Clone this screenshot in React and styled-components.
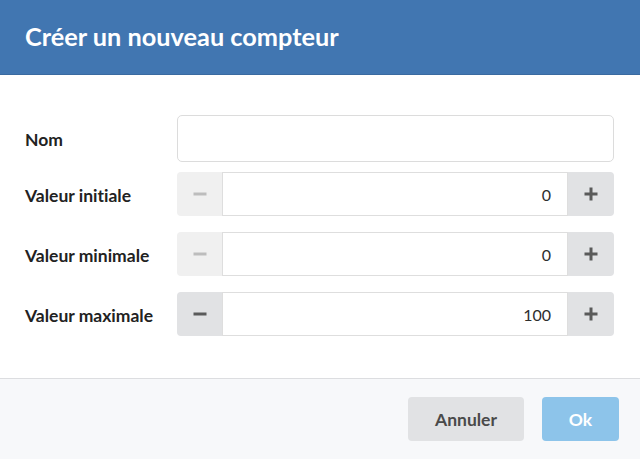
import * as React from 'react'
import styled, { createGlobalStyle } from 'styled-components'

const GlobalStyle = createGlobalStyle`
  html, body {
    margin: 0;
    padding: 0;
    background: #fff;
    font-family: Lato, "Open Sans", sans-serif;
    font-variant-ligatures: none;
  }
  * { box-sizing: border-box; }
`

const Dialog = styled.div`
  width: 640px;
  height: 459px;
  display: flex;
  flex-direction: column;
  background: #fff;
`

const Header = styled.header`
  height: 75px;
  background: #4176b1;
  border-bottom: 1px solid #3a6aa0;
  display: flex;
  align-items: center;
  padding: 0 25px 2px;
`

const Title = styled.h1`
  margin: 0;
  font-size: 25.3px;
  font-weight: 700;
  color: #fff;
`

const Body = styled.div`
  flex: 1;
  padding: 40px 26px 0 25px;
  display: flex;
  flex-direction: column;
`

const Row = styled.div`
  display: grid;
  grid-template-columns: 152px 1fr;
  align-items: center;
  margin-bottom: ${p => p.$gap}px;
`

const Label = styled.label`
  padding-top: 2px;
  font-size: 17.5px;
  font-weight: 700;
  color: #222;
`

const TextInput = styled.div`
  height: 47px;
  border: 1px solid #dcdcdc;
  border-radius: 5px;
  background: #fff;
`

const Stepper = styled.div`
  height: 44px;
  display: grid;
  grid-template-columns: 45px 1fr 46px;
  border-radius: 4px;
  overflow: hidden;
`

const StepButton = styled.div`
  display: flex;
  align-items: center;
  justify-content: center;
  background: ${p => (p.$disabled ? '#f0f0f0' : '#e1e2e4')};
  color: ${p => (p.$disabled ? '#bdbdbd' : '#5a5a5a')};
`

const Value = styled.div`
  display: flex;
  align-items: center;
  justify-content: flex-end;
  padding: 1px 16px 0 0;
  border: 1px solid #dedede;
  background: #fff;
  font-size: 16px;
  color: #2e2e2e;
`

const Footer = styled.footer`
  height: 81px;
  border-top: 1px solid #dcdde0;
  background: #f7f8fa;
  display: flex;
  justify-content: flex-end;
  gap: 18px;
  padding: 18px 21px 0 0;
`

const Button = styled.button`
  height: 44px;
  width: ${p => p.$width}px;
  padding-top: 2px;
  border: none;
  border-radius: 4px;
  font-family: inherit;
  font-size: 17.5px;
  font-weight: 700;
  background: ${p => (p.$primary ? '#8dc4ea' : '#e1e2e4')};
  color: ${p => (p.$primary ? '#fff' : '#4a4a4a')};
`

const Minus = () => (
  <svg width="14" height="14" viewBox="0 0 14 14">
    <rect x="0.5" y="5.5" width="13" height="3" fill="currentColor" />
  </svg>
)

const Plus = () => (
  <svg width="14" height="14" viewBox="0 0 14 14">
    <rect x="0.5" y="5.5" width="13" height="3" fill="currentColor" />
    <rect x="5.5" y="0.5" width="3" height="13" fill="currentColor" />
  </svg>
)

function NumberField({ value, minDisabled }) {
  return (
    <Stepper>
      <StepButton $disabled={minDisabled}>
        <Minus />
      </StepButton>
      <Value>{value}</Value>
      <StepButton>
        <Plus />
      </StepButton>
    </Stepper>
  )
}

const fields = [
  { label: 'Valeur initiale', value: 0, minDisabled: true },
  { label: 'Valeur minimale', value: 0, minDisabled: true },
  { label: 'Valeur maximale', value: 100, minDisabled: false },
]

export default function App() {
  return (
    <>
      <GlobalStyle />
      <Dialog>
        <Header>
          <Title>Créer un nouveau compteur</Title>
        </Header>
        <Body>
          <Row $gap={10}>
            <Label>Nom</Label>
            <TextInput />
          </Row>
          {fields.map(f => (
            <Row key={f.label} $gap={16}>
              <Label>{f.label}</Label>
              <NumberField value={f.value} minDisabled={f.minDisabled} />
            </Row>
          ))}
        </Body>
        <Footer>
          <Button $width={116}>Annuler</Button>
          <Button $width={77} $primary>Ok</Button>
        </Footer>
      </Dialog>
    </>
  )
}
